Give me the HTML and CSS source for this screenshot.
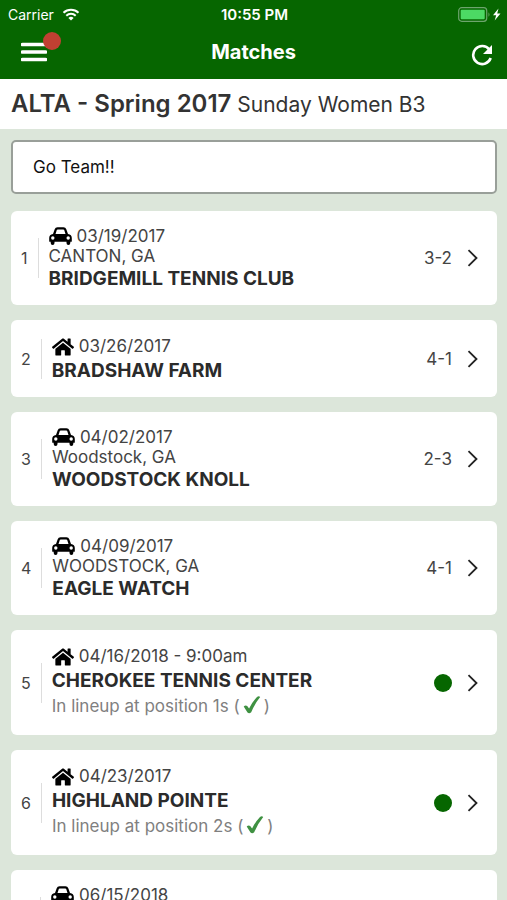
FILE: index.html
```html
<!DOCTYPE html>
<html lang="en">
<head>
    <meta charset="UTF-8">
    <meta name="viewport" content="width=device-width, initial-scale=1.0">
    <title>Matches</title>
    <link rel="stylesheet" href="styles.css">
</head>
<body>
    <!-- Shared icons -->
    <svg class="sprite" aria-hidden="true">
        <symbol id="car" viewBox="0 0 23 18">
            <path fill-rule="evenodd" d="M4 7 5.700 2.200Q6.400.2 8.500.2h6q2.100 0 2.800 2L19 7q3.800.5 3.800 4v3.200q0 .6-.6.6h-.9V16q0 1.900-1.900 1.900T17.500 16v-1.200H5.500V16q0 1.900-1.900 1.900T1.700 16v-1.200H.8q-.6 0-.6-.6V11Q.2 7.500 4 7zM6.500 7h10l-1.300-4q-.2-.6-.9-.6H8.700q-.7 0-.9.6z"/>
            <circle cx="3.800" cy="11" r="1.700" fill="#fff"/>
            <circle cx="19.200" cy="11" r="1.700" fill="#fff"/>
        </symbol>
        <symbol id="home" viewBox="0 32 576 448">
            <path d="M488 312.700V456c0 13.300-10.700 24-24 24H348c-6.600 0-12-5.400-12-12V356c0-6.600-5.400-12-12-12h-72c-6.600 0-12 5.400-12 12v112c0 6.600-5.400 12-12 12H112c-13.300 0-24-10.700-24-24V312.700c0-3.600 1.600-7 4.400-9.300l188-154.800c4.400-3.600 10.800-3.600 15.300 0l188 154.800c2.700 2.300 4.300 5.700 4.300 9.300zm83.600-60.900L488 182.900V44.400c0-6.600-5.400-12-12-12h-56c-6.600 0-12 5.400-12 12V117l-89.500-73.700c-17.700-14.600-43.300-14.600-61 0L4.400 251.800c-5.100 4.200-5.800 11.800-1.600 16.900l25.500 31c4.200 5.100 11.800 5.800 16.900 1.600l235.200-193.700c4.400-3.600 10.800-3.600 15.300 0l235.200 193.700c5.100 4.200 12.700 3.500 16.900-1.600l25.500-31c4.200-5.200 3.400-12.700-1.700-16.900z"/>
        </symbol>
        <symbol id="check" viewBox="0 0 18 18">
            <path d="M.7 10.600q1.800-2 3.500-.6l1.900 2.400Q9.800 5.200 14 .9q1.900-1.200 3.200.2Q11.600 8 8.200 16.300q-2 1.900-3.700.2z"/>
        </symbol>
        <symbol id="chevron" viewBox="0 0 11 18">
            <path d="M1.500 1.200 9.500 9l-8 7.800" fill="none" stroke="#222" stroke-width="1.800"/>
        </symbol>
    </svg>

    <header class="top">
        <div class="status">
            <div class="carrier">
                <span>Carrier</span>
                <svg class="wifi" viewBox="0 0 18 13" aria-hidden="true">
                    <path d="M1.500 4.800a10.800 10.800 0 0 1 15 0M4.300 7.700a6.800 6.800 0 0 1 9.400 0" fill="none" stroke="#fff" stroke-width="2"/>
                    <path d="M9 12.600 6.400 10a3.700 3.700 0 0 1 5.200 0z" fill="#fff"/>
                </svg>
            </div>
            <span class="time">10:55 PM</span>
            <svg class="battery" viewBox="0 0 43 15" aria-hidden="true">
                <rect x=".7" y=".7" width="28" height="13.600" rx="3" fill="none" stroke="#6da56d" stroke-width="1.200"/>
                <rect x="2.700" y="2.700" width="24" height="9.600" rx="1" fill="#4cd964"/>
                <path d="M30.500 5.200q2 2.300 0 4.600z" fill="#6da56d"/>
                <path d="m40.500 1.500-5.500 6.700h3.200l-1.500 5.300 5.800-7h-3.300z" fill="#fff"/>
            </svg>
        </div>
        <div class="nav">
            <button class="menu" aria-label="Menu">
                <svg viewBox="0 0 26 20" aria-hidden="true">
                    <path d="M1.500 2.500h23M1.500 10h23M1.500 17.500h23" stroke="#fff" stroke-width="3.600" stroke-linecap="round"/>
                </svg>
                <span class="badge"></span>
            </button>
            <h1>Matches</h1>
            <button class="refresh" aria-label="Refresh">
                <svg viewBox="0 0 22 22" aria-hidden="true">
                    <path d="M18.300 5.500A9 9 0 1 0 19.700 14" fill="none" stroke="#fff" stroke-width="2.600"/>
                    <path d="M21 1v9h-9z" fill="#fff"/>
                </svg>
            </button>
        </div>
    </header>

    <h2 class="league"><strong>ALTA - Spring 2017</strong> Sunday Women B3</h2>

    <main>
        <p class="message">Go Team!!</p>

        <a class="match away" href="#match-1">
            <span class="number">1</span>
            <div class="info">
                <div class="date"><svg class="car"><use href="#car"/></svg>03/19/2017</div>
                <div class="city">CANTON, GA</div>
                <div class="club">BRIDGEMILL TENNIS CLUB</div>
            </div>
            <span class="score">3-2</span>
            <svg class="chevron"><use href="#chevron"/></svg>
        </a>

        <a class="match at-home" href="#match-2">
            <span class="number">2</span>
            <div class="info">
                <div class="date"><svg class="home"><use href="#home"/></svg>03/26/2017</div>
                <div class="club">BRADSHAW FARM</div>
            </div>
            <span class="score">4-1</span>
            <svg class="chevron"><use href="#chevron"/></svg>
        </a>

        <a class="match away" href="#match-3">
            <span class="number">3</span>
            <div class="info">
                <div class="date"><svg class="car"><use href="#car"/></svg>04/02/2017</div>
                <div class="city">Woodstock, GA</div>
                <div class="club">WOODSTOCK KNOLL</div>
            </div>
            <span class="score">2-3</span>
            <svg class="chevron"><use href="#chevron"/></svg>
        </a>

        <a class="match away" href="#match-4">
            <span class="number">4</span>
            <div class="info">
                <div class="date"><svg class="car"><use href="#car"/></svg>04/09/2017</div>
                <div class="city">WOODSTOCK, GA</div>
                <div class="club">EAGLE WATCH</div>
            </div>
            <span class="score">4-1</span>
            <svg class="chevron"><use href="#chevron"/></svg>
        </a>

        <a class="match at-home" href="#match-5">
            <span class="number">5</span>
            <div class="info">
                <div class="date"><svg class="home"><use href="#home"/></svg>04/16/2018 - 9:00am</div>
                <div class="club">CHEROKEE TENNIS CENTER</div>
                <div class="lineup">In lineup at position 1s (<svg class="check"><use href="#check"/></svg>)</div>
            </div>
            <span class="dot"></span>
            <svg class="chevron"><use href="#chevron"/></svg>
        </a>

        <a class="match at-home" href="#match-6">
            <span class="number">6</span>
            <div class="info">
                <div class="date"><svg class="home"><use href="#home"/></svg>04/23/2017</div>
                <div class="club">HIGHLAND POINTE</div>
                <div class="lineup">In lineup at position 2s (<svg class="check"><use href="#check"/></svg>)</div>
            </div>
            <span class="dot"></span>
            <svg class="chevron"><use href="#chevron"/></svg>
        </a>

        <a class="match away" href="#match-7">
            <span class="number">7</span>
            <div class="info">
                <div class="date"><svg class="car"><use href="#car"/></svg>06/15/2018</div>
            </div>
            <svg class="chevron"><use href="#chevron"/></svg>
        </a>
    </main>
</body>
</html>
```

FILE: styles.css
```css
* {
    box-sizing: border-box;
}
body {
    margin: 0;
    height: 100vh;
    display: flex;
    flex-direction: column;
    font-family: Inter, "Liberation Sans", sans-serif;
    font-size: 17px;
    color: #333;
    background-color: #dce6da;
}
.sprite {
    position: absolute;
    width: 0;
    height: 0;
}
button {
    padding: 0;
    border: none;
    background: none;
    cursor: pointer;
}
button svg {
    display: block;
}

/* Header */
.top {
    flex: none;
    background-color: #066600;
    color: #fff;
}
.status {
    display: grid;
    grid-template-columns: 1fr auto 1fr;
    align-items: center;
    height: 28px;
    padding: 0 6px 0 8px;
    font-size: 14px;
}
.carrier {
    display: flex;
    align-items: center;
    gap: 8px;
}
.wifi {
    width: 18px;
    height: 13px;
}
.time {
    font-size: 15px;
    font-weight: 600;
}
.battery {
    justify-self: end;
    width: 43px;
    height: 15px;
}
.nav {
    display: grid;
    grid-template-columns: 1fr auto 1fr;
    align-items: center;
    height: 51px;
    padding: 0 14px 4px;
}
.nav h1 {
    margin: 0;
    font-size: 20px;
    font-weight: 700;
}
.menu {
    position: relative;
    justify-self: start;
    margin-left: 7px;
}
.menu svg {
    width: 26px;
    height: 20px;
}
.badge {
    position: absolute;
    top: -10px;
    left: 22px;
    width: 18px;
    height: 18px;
    border-radius: 50%;
    background-color: #c04032;
}
.refresh {
    justify-self: end;
    padding-top: 6px;
}
.refresh svg {
    width: 22px;
    height: 22px;
}

.league {
    flex: none;
    margin: 0;
    padding: 1px 11px 0;
    font-size: 21px;
    line-height: 48px;
    font-weight: 400;
    background-color: #fff;
}
.league strong {
    font-size: 24px;
    font-weight: 600;
}

/* Match list */
main {
    flex: 1;
    display: flex;
    flex-direction: column;
    gap: 15px;
    padding: 11px 10px 12px 11px;
    overflow-y: auto;
    scrollbar-width: none;
}
.message {
    flex: none;
    margin: 0 0 2px;
    padding: 0 20px;
    border: 2px solid #999f99;
    border-radius: 5px;
    line-height: 50px;
    color: #111;
    background-color: #fff;
}
.match {
    flex: none;
    display: flex;
    align-items: center;
    padding: 15px 19px 15px 10px;
    border-radius: 6px;
    color: #444;
    text-decoration: none;
    background-color: #fff;
}
.away {
    min-height: 94px;
}
.number {
    display: flex;
    align-items: center;
    gap: 10px;
    font-size: 16px;
}
.number::after {
    content: "";
    height: 40px;
    border-left: 1px solid #ddd;
}
.info {
    flex: 1;
    align-self: flex-start;
    margin-bottom: -2px;
    padding-left: 10px;
}
.date {
    display: flex;
    align-items: center;
    gap: 5px;
    line-height: 20px;
}
.at-home .date {
    line-height: 23px;
}
.city {
    line-height: 20px;
}
.club {
    font-size: 19px;
    line-height: 26px;
    font-weight: 700;
    color: #2b2b2b;
}
.lineup {
    padding-bottom: 4px;
    line-height: 24px;
    color: #808080;
}
.car {
    width: 23px;
    height: 18px;
    fill: #000;
}
.home {
    width: 22px;
    height: 18px;
    fill: #000;
}
.check {
    width: 18px;
    height: 18px;
    margin: 0 3px;
    fill: #3f9142;
    vertical-align: -2px;
}
.dot {
    width: 18px;
    height: 18px;
    border-radius: 50%;
    background-color: #066600;
}
.chevron {
    width: 11px;
    height: 18px;
    margin-left: 15px;
}
```
